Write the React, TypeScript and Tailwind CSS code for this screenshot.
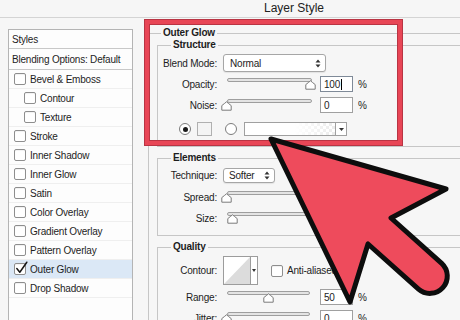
import React from "react";

const Check = ({ checked = false }: { checked?: boolean }) => (
  <span className="relative block w-[12px] h-[12px] shrink-0 rounded-[2px] border border-[#8e8e8e] bg-white shadow-[inset_0_1px_1px_rgba(0,0,0,0.06)]">
    {checked && (
      <svg className="absolute left-[0px] top-[-3px]" width="14" height="14" viewBox="0 0 14 14">
        <path d="M1.8 7.6 L4.8 11.2 L11.8 1.2" fill="none" stroke="#151515" strokeWidth="1.5" strokeLinecap="round" strokeLinejoin="round" />
      </svg>
    )}
  </span>
);

const Slider = ({ pos, width = 85 }: { pos: number; width?: number }) => (
  <div className="relative h-[12px] ml-[10px] shrink-0" style={{ width }}>
    <div className="absolute left-0 right-0 top-0 h-[4px] rounded-full border border-[#9e9e9e] bg-[#e4e4e4]" />
    <svg className="absolute top-[2px]" style={{ left: pos }} width="11" height="10" viewBox="0 0 11 10">
      <path d="M5.5 0.8 Q7.5 2.5 10.2 4.6 V9.2 H0.8 V4.6 Q3.5 2.5 5.5 0.8 Z" fill="#fff" stroke="#7a7a7a" strokeWidth="1" strokeLinejoin="round" />
    </svg>
  </div>
);

const Num = ({ v, active = false, ml = 8 }: { v: string; active?: boolean; ml?: number }) => (
  <>
    <div
      className={
        "w-[33px] h-[16px] shrink-0 border bg-white flex items-center pl-[3px] " +
        (active ? "border-[#7f8a98]" : "border-[#a0a0a0]")
      }
      style={{ marginLeft: ml }}
    >
      <span>{v}</span>
      {active && <span className="block w-px h-[11px] bg-black ml-[1px]" />}
    </div>
    <span className="ml-[5px]">%</span>
  </>
);

const UpDown = () => (
  <svg width="6" height="9" viewBox="0 0 6 9">
    <path d="M3 0.5 L5.5 3.5 H0.5 Z M3 8.5 L5.5 5.5 H0.5 Z" fill="#333" />
  </svg>
);

const Label = ({ children }: { children: React.ReactNode }) => (
  <div className="w-[59px] shrink-0 text-right">{children}</div>
);

const Radio = ({ on = false }: { on?: boolean }) => (
  <span className="flex items-center justify-center w-[12px] h-[12px] shrink-0 rounded-full border border-[#7c7c7c] bg-white">
    {on && <span className="block w-[5px] h-[5px] rounded-full bg-[#1a1a1a]" />}
  </span>
);

const items: { name: string; indent?: boolean; checked?: boolean; active?: boolean }[] = [
  { name: "Bevel & Emboss" },
  { name: "Contour", indent: true },
  { name: "Texture", indent: true },
  { name: "Stroke" },
  { name: "Inner Shadow" },
  { name: "Inner Glow" },
  { name: "Satin" },
  { name: "Color Overlay" },
  { name: "Gradient Overlay" },
  { name: "Pattern Overlay" },
  { name: "Outer Glow", checked: true, active: true },
  { name: "Drop Shadow" },
];

const legendCls = "font-bold leading-[12px] px-[2px] ml-[13px]";
const groupCls = "ml-[8px] border-l border-t border-b border-[#c6c6c6] border-r-0";

export default function App() {
  return (
    <div className="relative w-[460px] h-[320px] overflow-hidden bg-[#f6f6f6] text-[#1d1d1d] text-[10px] tracking-[-0.2px] font-['Liberation_Sans',Arial,sans-serif]">
      <div className="h-[18px] border-b border-[#d4d4d4] pl-[264px] text-[12px] leading-[17px] tracking-normal text-[#222]">
        Layer Style
      </div>

      <div className="flex items-start">
        {/* Left styles list */}
        <div className="ml-[8px] mt-[11px] w-[125px] h-[300px] shrink-0 border border-[#b4b4b4] bg-[#fdfdfd]">
          <div className="h-[19px] border-b border-[#c8c8c8] flex items-center pl-[3px]">Styles</div>
          <div className="h-[21px] border-b border-[#c8c8c8] flex items-center pl-[3px]">Blending Options: Default</div>
          {items.map((it) => (
            <div
              key={it.name}
              className={
                "h-[19px] border-b border-[#efefef] flex items-center gap-[4px] " +
                (it.indent ? "pl-[15px] " : "pl-[5px] ") +
                (it.active ? "bg-[#dbe8f6]" : "")
              }
            >
              <Check checked={it.checked} />
              <span>{it.name}</span>
            </div>
          ))}
        </div>

        {/* Right settings */}
        <div className="ml-[15px] mt-[9px] w-[330px] shrink-0">
          <fieldset className="border-l border-t border-[#c6c6c6] h-[300px]">
            <legend className="font-bold leading-[12px] px-[2px] ml-[12px]">Outer Glow</legend>

            <fieldset className={groupCls + " pt-[3px] pb-[10px]"}>
              <legend className={legendCls}>Structure</legend>
              <div className="flex items-center h-[18px]">
                <Label>Blend Mode:</Label>
                <div className="ml-[6px] w-[103px] h-[18px] rounded-[3px] border border-[#a6a6a6] bg-white shadow-[0_1px_1px_rgba(0,0,0,0.08)] flex items-center justify-between pl-[6px] pr-[4px]">
                  <span>Normal</span>
                  <UpDown />
                </div>
              </div>
              <div className="flex items-center h-[16px] mt-[4px]">
                <Label>Opacity:</Label>
                <Slider pos={78} />
                <Num v="100" active />
              </div>
              <div className="flex items-center h-[16px] mt-[5px]">
                <Label>Noise:</Label>
                <Slider pos={-6} />
                <Num v="0" />
              </div>
              <div className="flex items-center h-[14px] mt-[9px]">
                <div className="ml-[21px]">
                  <Radio on />
                </div>
                <div className="ml-[6px] w-[15px] h-[14px] border border-[#b0b0b0] bg-[#f4f4f4]" />
                <div className="ml-[13px]">
                  <Radio />
                </div>
                <div className="ml-[7px] w-[103px] h-[14px] border border-[#a0a0a0] bg-white flex">
                  <svg className="flex-1 h-full" viewBox="0 0 90 12" preserveAspectRatio="none">
                    <defs>
                      <pattern id="chk" width="6" height="6" patternUnits="userSpaceOnUse">
                        <rect width="6" height="6" fill="#fff" />
                        <rect width="3" height="3" fill="#e6e6e6" />
                        <rect x="3" y="3" width="3" height="3" fill="#e6e6e6" />
                      </pattern>
                      <linearGradient id="fade" x1="0" x2="1" y1="0" y2="0">
                        <stop offset="0" stopColor="#fff" stopOpacity="1" />
                        <stop offset="0.55" stopColor="#fff" stopOpacity="1" />
                        <stop offset="1" stopColor="#fff" stopOpacity="0.2" />
                      </linearGradient>
                    </defs>
                    <rect width="90" height="12" fill="url(#chk)" />
                    <rect width="90" height="12" fill="url(#fade)" />
                  </svg>
                  <div className="w-[11px] border-l border-[#a0a0a0] flex items-center justify-center">
                    <svg width="5" height="3" viewBox="0 0 5 3">
                      <path d="M0 0 H5 L2.5 3 Z" fill="#333" />
                    </svg>
                  </div>
                </div>
              </div>
            </fieldset>

            <fieldset className={groupCls + " mt-[5px] pt-[4px] pb-[9px]"}>
              <legend className={legendCls}>Elements</legend>
              <div className="flex items-center h-[15px]">
                <Label>Technique:</Label>
                <div className="ml-[6px] w-[52px] h-[15px] rounded-[3px] border border-[#a6a6a6] bg-white shadow-[0_1px_1px_rgba(0,0,0,0.08)] flex items-center justify-between pl-[5px] pr-[4px]">
                  <span>Softer</span>
                  <UpDown />
                </div>
              </div>
              <div className="flex items-center h-[16px] mt-[6px]">
                <Label>Spread:</Label>
                <Slider pos={-6} />
              </div>
              <div className="flex items-center h-[16px] mt-[5px]">
                <Label>Size:</Label>
                <Slider pos={0} />
              </div>
            </fieldset>

            <fieldset className={groupCls + " mt-[5px] pt-[3px] pb-[9px]"}>
              <legend className={legendCls}>Quality</legend>
              <div className="flex items-center h-[29px]">
                <Label>Contour:</Label>
                <div className="ml-[6px] flex h-[29px]">
                  <div className="w-[28px] h-[29px] border border-[#9c9c9c] bg-white">
                    <svg width="26" height="27" viewBox="0 0 26 27">
                      <path d="M0 27 L26 0 V27 Z" fill="#dcdcdc" />
                    </svg>
                  </div>
                  <div className="w-[7px] h-[29px] border border-l-0 border-[#9c9c9c] bg-white flex items-center justify-center">
                    <svg width="4" height="3" viewBox="0 0 4 3">
                      <path d="M0 0 H4 L2 3 Z" fill="#333" />
                    </svg>
                  </div>
                </div>
                <div className="ml-[13px]">
                  <Check />
                </div>
                <span className="ml-[4px]">Anti-aliased</span>
              </div>
              <div className="flex items-center h-[16px] mt-[4px]">
                <Label>Range:</Label>
                <Slider pos={36} width={83} />
                <Num v="50" ml={10} />
              </div>
              <div className="flex items-center h-[16px] mt-[5px]">
                <Label>Jitter:</Label>
                <Slider pos={-6} width={83} />
                <Num v="0" ml={10} />
              </div>
            </fieldset>
          </fieldset>
        </div>
      </div>

      {/* Annotation overlay: red highlight box */}
      <div className="absolute left-[145px] top-[20px] w-[257px] h-[125px] border-[4px] border-[#e84656] shadow-[0_0_0_1px_#b93443,inset_0_0_0_1px_#b93443] pointer-events-none" />

      {/* Annotation overlay: red arrow */}
      <svg className="absolute left-0 top-0 pointer-events-none" width="460" height="320" viewBox="0 0 460 320">
        <path
          d="M271 139 L446 189 L391 218 L441.7 263.3 A17.35 17.35 0 0 1 418.5 289.1 L368 244 L350 302 Z"
          fill="#ee4b5c"
          stroke="#0d0d0d"
          strokeWidth="5"
          strokeLinejoin="round"
        />
      </svg>
    </div>
  );
}
